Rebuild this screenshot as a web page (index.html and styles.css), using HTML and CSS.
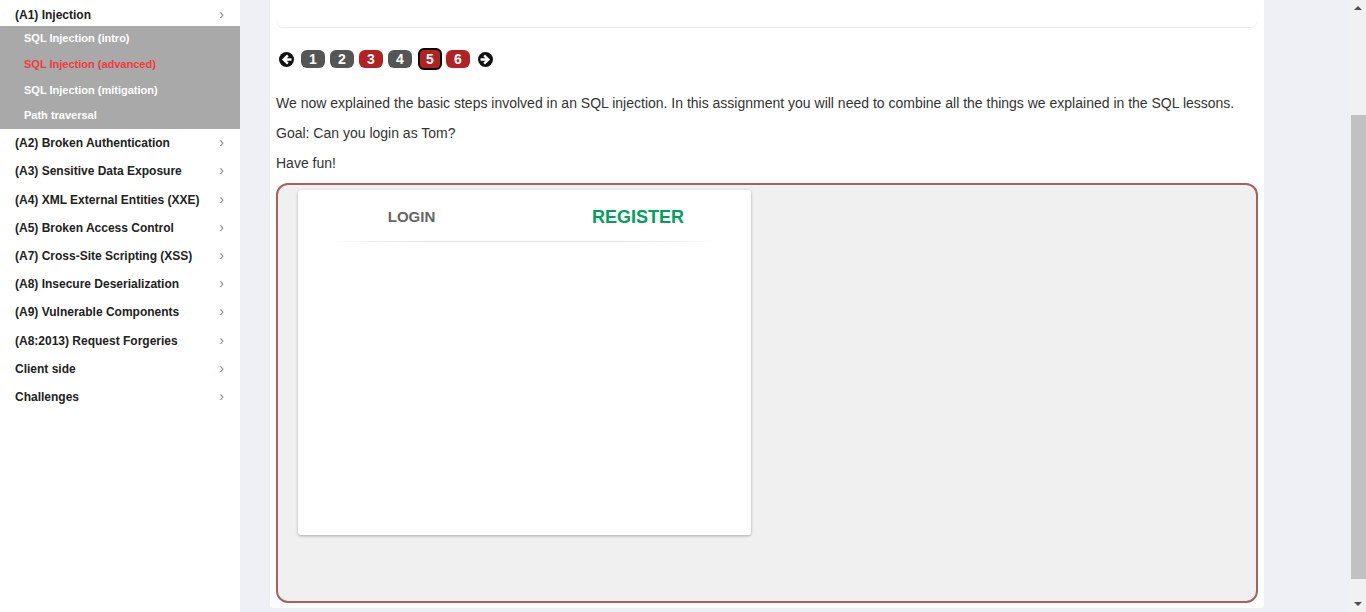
FILE: index.html
```html
<!DOCTYPE html>
<html>
<head>
<meta charset="utf-8">
<link rel="stylesheet" href="styles.css">
</head>
<body>
<div class="page">
  <nav class="sidebar">
    <div class="cat"><span>(A1) Injection</span><span class="chev">&#8250;</span></div>
    <ul class="sub">
      <li>SQL Injection (intro)</li>
      <li class="active">SQL Injection (advanced)</li>
      <li>SQL Injection (mitigation)</li>
      <li>Path traversal</li>
    </ul>
    <div class="cat"><span>(A2) Broken Authentication</span><span class="chev">&#8250;</span></div>
    <div class="cat"><span>(A3) Sensitive Data Exposure</span><span class="chev">&#8250;</span></div>
    <div class="cat"><span>(A4) XML External Entities (XXE)</span><span class="chev">&#8250;</span></div>
    <div class="cat"><span>(A5) Broken Access Control</span><span class="chev">&#8250;</span></div>
    <div class="cat"><span>(A7) Cross-Site Scripting (XSS)</span><span class="chev">&#8250;</span></div>
    <div class="cat"><span>(A8) Insecure Deserialization</span><span class="chev">&#8250;</span></div>
    <div class="cat"><span>(A9) Vulnerable Components</span><span class="chev">&#8250;</span></div>
    <div class="cat"><span>(A8:2013) Request Forgeries</span><span class="chev">&#8250;</span></div>
    <div class="cat"><span>Client side</span><span class="chev">&#8250;</span></div>
    <div class="cat"><span>Challenges</span><span class="chev">&#8250;</span></div>
  </nav>
  <main class="main">
    <div class="card">
      <div class="topbox"></div>
      <div class="pager">
        <span class="arrow first"><svg width="15" height="15" viewBox="0 0 16 16"><circle cx="8" cy="8" r="8" fill="#111"/><path d="M12 8H6M8.5 4.6 5 8l3.5 3.4" stroke="#fff" stroke-width="2.6" fill="none" stroke-linecap="square"/></svg></span>
        <span class="pg gray">1</span>
        <span class="pg gray">2</span>
        <span class="pg red">3</span>
        <span class="pg gray">4</span>
        <span class="pg red cur">5</span>
        <span class="pg red">6</span>
        <span class="arrow last"><svg width="15" height="15" viewBox="0 0 16 16"><circle cx="8" cy="8" r="8" fill="#111"/><path d="M4 8h6M7.5 4.6 11 8l-3.5 3.4" stroke="#fff" stroke-width="2.6" fill="none" stroke-linecap="square"/></svg></span>
      </div>
      <p class="txt">We now explained the basic steps involved in an SQL injection. In this assignment you will need to combine all the things we explained in the SQL lessons.</p>
      <p class="txt">Goal: Can you login as Tom?</p>
      <p class="txt">Have fun!</p>
      <div class="attack">
        <div class="panel">
          <div class="tabs">
            <span class="tab login">LOGIN</span>
            <span class="tab register">REGISTER</span>
          </div>
          <div class="sep"></div>
        </div>
      </div>
    </div>
  </main>
  <div class="scrollbar">
    <div class="sb-btn"><svg width="8" height="4" viewBox="0 0 8 4"><path d="M0 4 4 0 8 4z" fill="#505050"/></svg></div>
    <div class="sb-track"><div class="sb-thumb"></div></div>
    <div class="sb-btn"><svg width="8" height="4" viewBox="0 0 8 4"><path d="M0 0 4 4 8 0z" fill="#505050"/></svg></div>
  </div>
</div>
</body>
</html>
```
FILE: styles.css
```css
* { box-sizing: border-box; }
html, body { margin: 0; padding: 0; height: 100%; overflow: hidden; }
body { font-family: Arial, "Liberation Sans", sans-serif; background: #eff0f5; color: #333; }
.page { display: flex; height: 612px; }
.sidebar { width: 240px; flex: none; background: #fff; padding-top: 4px; }
.cat { display: flex; justify-content: space-between; align-items: center; height: 28.2px; padding: 0 16px 0 15px; font-size: 12px; font-weight: bold; color: #222; }
.cat:first-child { height: 22px; }
.chev { color: #888; font-weight: normal; font-size: 14px; position: relative; top: -1px; }
.sub { list-style: none; margin: 0; padding: 0; background: #a9a9a9; }
.sub li { height: 25.8px; line-height: 25.8px; padding-left: 24px; font-size: 11px; font-weight: bold; color: #fff; }
.sub li.active { color: #ee3b3b; }
.main { width: 1110px; flex: none; padding-left: 30px; padding-right: 86px; }
.card { background: #fff; height: 608px; padding: 0 6px 5px 6px; display: flex; flex-direction: column; border-radius: 0 0 4px 4px; }
.topbox { height: 27px; margin: 0 1px; border-radius: 0 0 6px 6px; box-shadow: 0 1px 1px rgba(0,0,0,0.08); flex: none; }
.pager { display: flex; align-items: center; margin-top: 23px; height: 18px; padding-left: 3px; }
.arrow { display: flex; width: 15px; height: 15px; }
.arrow.first { margin-right: 7px; }
.arrow.last { margin-left: 3px; }
.pg { display: flex; align-items: center; justify-content: center; width: 24px; height: 18px; border-radius: 6px; color: #fff; font-weight: bold; font-size: 14px; margin-right: 5px; }
.pg.gray { background: #555; }
.pg.red { background: #b22222; }
.pg.cur { border: 2px solid #000; height: 22px; margin-left: 1px; margin-right: 4px; }
.txt { margin: 0; font-size: 14px; line-height: 20px; margin-top: 25px; }
.txt + .txt { margin-top: 10px; }
.attack { flex: 1; margin-top: 10px; border: 2px solid #a86060; border-radius: 12px; background: #f0f0f0; padding: 5px 20px; }
.panel { width: 453px; height: 345px; background: #fff; border-radius: 3px; box-shadow: 0 1px 3px rgba(0,0,0,0.3); padding-top: 15px; }
.tabs { display: flex; height: 24px; align-items: center; }
.tab { width: 226px; text-align: center; font-weight: bold; }
.tab.login { font-size: 15px; color: #666; padding-left: 1px; position: relative; top: -1px; }
.tab.register { font-size: 18px; color: #029f5b; position: relative; left: 1px; }
.sep { height: 1px; margin: 12px 30px 0 30px; background: linear-gradient(to right, rgba(0,0,0,0), rgba(0,0,0,0.12) 25%, rgba(0,0,0,0.12) 75%, rgba(0,0,0,0)); }
.scrollbar { width: 16px; flex: none; background: #f1f1f1; display: flex; flex-direction: column; margin-left: auto; }
.sb-btn { height: 16px; display: flex; align-items: center; justify-content: center; flex: none; }
.sb-track { flex: 1; padding-top: 99px; padding-bottom: 17px; padding-left: 1px; }
.sb-thumb { background: #c1c1c1; height: 100%; }
```
